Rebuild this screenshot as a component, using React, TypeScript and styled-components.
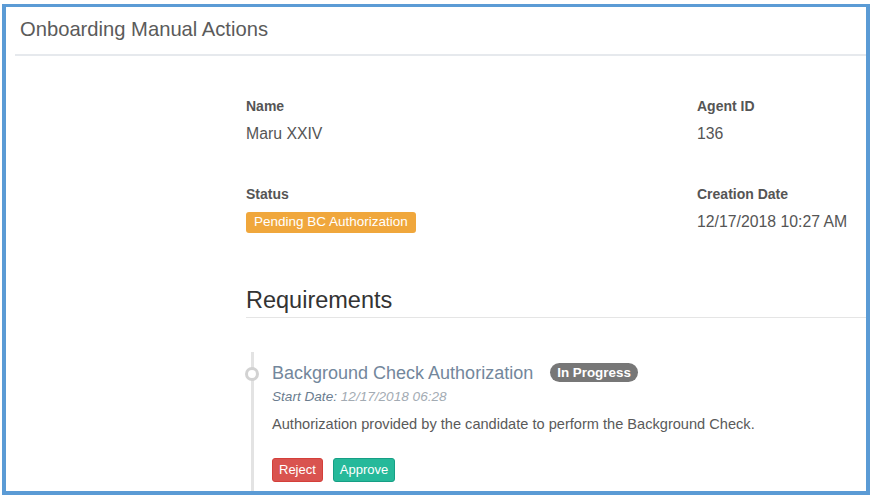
import React from "react";
import styled, { createGlobalStyle } from "styled-components";

const Global = createGlobalStyle`
  html, body { margin: 0; padding: 0; background: #ffffff; }
  body { font-family: "Liberation Sans", Arial, sans-serif; color: #555; }
  * { box-sizing: border-box; }
`;

const Frame = styled.div`
  margin: 4px 0 0 2px;
  width: 868px;
  height: 491px;
  border-style: solid;
  border-color: #5b9bd5;
  border-width: 3px 4px 4px 4px;
  overflow: hidden;
  background: #fff;
  display: flex;
  flex-direction: column;
`;

const Header = styled.div`
  margin-left: 9px;
  padding: 10px 0 13px 5px;
  border-bottom: 2px solid #e6e9ed;
`;

const Title = styled.h2`
  margin: 0;
  font-size: 20.2px;
  line-height: 24px;
  font-weight: normal;
  color: #5b5b5b;
`;

const Body = styled.div`
  padding: 40px 0 0 240px;
`;

const InfoGrid = styled.div`
  display: grid;
  grid-template-columns: 451px 1fr;
  row-gap: 40px;
`;

const Field = styled.div`
  display: flex;
  flex-direction: column;
  align-items: flex-start;
`;

const Label = styled.div`
  font-size: 14px;
  line-height: 20px;
  font-weight: bold;
  color: #555;
  margin-bottom: 8px;
`;

const Value = styled.div`
  font-size: 15.8px;
  line-height: 20px;
  color: #555;
`;

const StatusBadge = styled.span`
  display: inline-block;
  height: 20.5px;
  line-height: 20.5px;
  padding: 0 8px;
  font-size: 13.5px;
  color: #fff;
  background: #f0a73c;
  border-radius: 3px;
`;

const SectionTitle = styled.h3`
  margin: 54px 0 0;
  padding-bottom: 4px;
  font-size: 23.5px;
  line-height: 26px;
  font-weight: normal;
  color: #333;
  border-bottom: 1px solid #e5e5e5;
`;

const Timeline = styled.div`
  margin: 34px 0 0 5px;
  border-left: 3px solid #e3e3e3;
  min-height: 200px;
`;

const Item = styled.div`
  position: relative;
  padding: 10px 0 0 18px;
`;

const Dot = styled.span`
  position: absolute;
  left: -9px;
  top: 15px;
  width: 14px;
  height: 14px;
  border-radius: 50%;
  border: 3px solid #d2d2d2;
  background: #fff;
`;

const ItemHead = styled.div`
  display: flex;
  align-items: center;
  gap: 17px;
`;

const ItemTitle = styled.div`
  font-size: 18px;
  line-height: 22px;
  color: #73879c;
`;

const PillBadge = styled.span`
  display: inline-block;
  height: 19px;
  line-height: 19px;
  padding: 0 7px;
  font-size: 13.4px;
  font-weight: bold;
  color: #fff;
  background: #777;
  border-radius: 10px;
`;

const Meta = styled.div`
  margin-top: 4px;
  font-size: 13.6px;
  line-height: 18px;
  font-style: italic;
  color: #6b7d8f;
`;

const MetaDate = styled.span`
  color: #a3abb3;
`;

const Description = styled.p`
  margin: 8px 0 0;
  font-size: 14.6px;
  line-height: 20px;
  color: #5a5a5a;
`;

const Actions = styled.div`
  display: flex;
  gap: 10px;
  margin-top: 24px;
`;

const Button = styled.button<{ $variant: "danger" | "success" }>`
  height: 24px;
  padding: 0 6px;
  font-family: "Liberation Sans", Arial, sans-serif;
  font-size: 13px;
  color: #fff;
  border-radius: 3px;
  cursor: pointer;
  background: ${(p) => (p.$variant === "danger" ? "#d9534f" : "#26b99a")};
  border: 1px solid ${(p) => (p.$variant === "danger" ? "#d43f3a" : "#169f85")};
`;

export default function App() {
  return (
    <>
      <Global />
      <Frame>
        <Header>
          <Title>Onboarding Manual Actions</Title>
        </Header>
        <Body>
          <InfoGrid>
            <Field>
              <Label>Name</Label>
              <Value>Maru XXIV</Value>
            </Field>
            <Field>
              <Label>Agent ID</Label>
              <Value>136</Value>
            </Field>
            <Field>
              <Label>Status</Label>
              <StatusBadge>Pending BC Authorization</StatusBadge>
            </Field>
            <Field>
              <Label>Creation Date</Label>
              <Value>12/17/2018 10:27 AM</Value>
            </Field>
          </InfoGrid>
          <SectionTitle>Requirements</SectionTitle>
          <Timeline>
            <Item>
              <Dot />
              <ItemHead>
                <ItemTitle>Background Check Authorization</ItemTitle>
                <PillBadge>In Progress</PillBadge>
              </ItemHead>
              <Meta>
                Start Date: <MetaDate>12/17/2018 06:28</MetaDate>
              </Meta>
              <Description>
                Authorization provided by the candidate to perform the Background Check.
              </Description>
              <Actions>
                <Button $variant="danger">Reject</Button>
                <Button $variant="success">Approve</Button>
              </Actions>
            </Item>
          </Timeline>
        </Body>
      </Frame>
    </>
  );
}
